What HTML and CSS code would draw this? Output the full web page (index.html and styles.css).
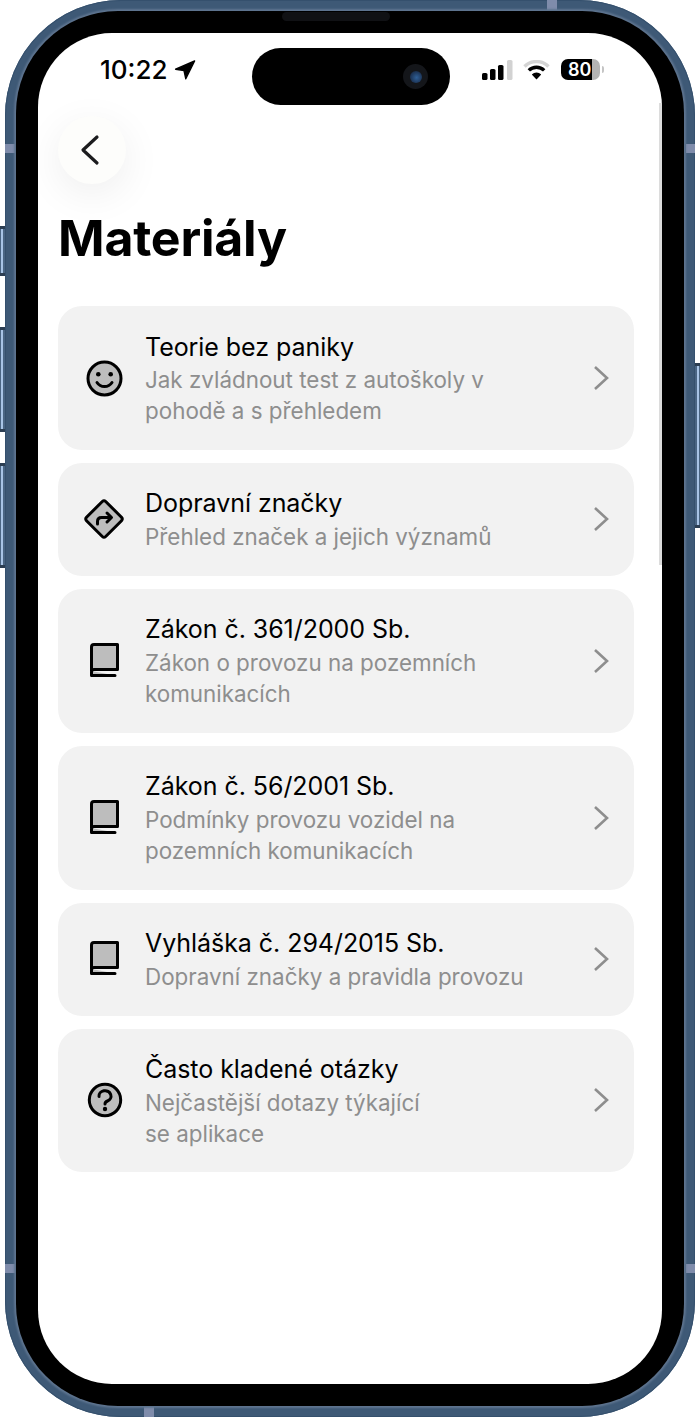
FILE: index.html
```html
<!DOCTYPE html>
<html lang="cs">
<head>
<meta charset="utf-8">
<title>Materiály</title>
<link rel="stylesheet" href="styles.css">
</head>
<body>
<div class="device">
  <span class="side side-l1"></span>
  <span class="side side-l2"></span>
  <span class="side side-l3"></span>
  <span class="side side-r1"></span>
  <div class="phone">
    <span class="band band-top"></span>
    <span class="band band-bottom"></span>
    <span class="band band-l1"></span>
    <span class="band band-l2"></span>
    <span class="band band-r1"></span>
    <span class="band band-r2"></span>
    <div class="bezel">
      <span class="speaker"></span>
      <div class="screen">
        <span class="edge"></span>
        <header class="status">
          <div class="status-left">
            <span class="time">10:22</span>
            <svg class="loc" width="22" height="20" viewBox="0 0 22 20"><path d="M20.6 1 L1.6 9.2 L10 10.6 L11.8 18.8 Z" fill="#000" stroke="#000" stroke-width="1.4" stroke-linejoin="round"/></svg>
          </div>
          <div class="island">
            <span class="camera"><span class="lens"></span></span>
          </div>
          <div class="status-right">
            <svg width="31" height="20" viewBox="0 0 31 20"><rect x="0" y="13" width="5.5" height="7" rx="1.6" fill="#000"/><rect x="8" y="9" width="5.5" height="11" rx="1.6" fill="#000"/><rect x="16" y="5" width="5.5" height="15" rx="1.6" fill="#000"/><rect x="25" y="0" width="5.5" height="20" rx="1.6" fill="#d2d2d2"/></svg>
            <svg class="wifi" width="27" height="20" viewBox="0 0 27 20"><path d="M1.5 6.5 A17 17 0 0 1 25.5 6.5" fill="none" stroke="#d4d4d4" stroke-width="3.4"/><path d="M5.8 10.4 A11 11 0 0 1 21.2 10.4" fill="none" stroke="#000" stroke-width="3.4"/><path d="M13.5 19.6 L8.8 14.4 A7 7 0 0 1 18.2 14.4 Z" fill="#000"/></svg>
            <span class="battery"><span class="batt-num">80</span></span>
          </div>
        </header>

        <button class="back" type="button" aria-label="Zpět">
          <svg width="20" height="32" viewBox="0 0 20 32"><path d="M17 3 L3 16 L17 29" fill="none" stroke="#1c1c1e" stroke-width="3.2" stroke-linecap="round" stroke-linejoin="round"/></svg>
        </button>

        <h1 class="title">Materiály</h1>

        <ul class="list">
          <li class="card">
            <svg class="icon" width="40" height="40" viewBox="0 0 40 40"><circle cx="20.5" cy="20.5" r="16.5" fill="#bdbdbd" stroke="#000" stroke-width="3"/><circle cx="14.3" cy="16.3" r="2.3" fill="#000"/><circle cx="26.7" cy="16.3" r="2.3" fill="#000"/><path d="M13 24.5 A9 9 0 0 0 28 24.5" fill="none" stroke="#000" stroke-width="3" stroke-linecap="round"/></svg>
            <div class="text">
              <div class="name">Teorie bez paniky</div>
              <div class="desc">Jak zvládnout test z autoškoly v<br>pohodě a s přehledem</div>
            </div>
            <svg class="chev" width="16" height="26" viewBox="0 0 16 26"><path d="M2 2 L14 13 L2 24" fill="none" stroke="#8e8e8e" stroke-width="2.6"/></svg>
          </li>
          <li class="card">
            <svg class="icon" width="40" height="40" viewBox="0 0 40 40"><path d="M18.3 2.5 Q20 1 21.7 2.5 L37.5 18.3 Q39 20 37.5 21.7 L21.7 37.5 Q20 39 18.3 37.5 L2.5 21.7 Q1 20 2.5 18.3 Z" fill="#bdbdbd" stroke="#000" stroke-width="3" stroke-linejoin="round"/><path d="M13.5 25 V22.5 Q13.5 18.5 17.5 18.5 H27 M23 14 L27.5 18.5 L23 23" fill="none" stroke="#000" stroke-width="3" stroke-linecap="round" stroke-linejoin="round"/></svg>
            <div class="text">
              <div class="name">Dopravní značky</div>
              <div class="desc">Přehled značek a jejich významů</div>
            </div>
            <svg class="chev" width="16" height="26" viewBox="0 0 16 26"><path d="M2 2 L14 13 L2 24" fill="none" stroke="#8e8e8e" stroke-width="2.6"/></svg>
          </li>
          <li class="card">
            <svg class="icon" width="40" height="40" viewBox="0 0 40 40"><path d="M7.5 30 V6 Q7.5 3.5 10 3.5 H33.5 V28.5 H10 Q7.5 28.5 7.5 31 V34.5 H31" fill="#bdbdbd" stroke="#000" stroke-width="3" stroke-linejoin="round" stroke-linecap="round"/></svg>
            <div class="text">
              <div class="name">Zákon č. 361/2000 Sb.</div>
              <div class="desc">Zákon o provozu na pozemních<br>komunikacích</div>
            </div>
            <svg class="chev" width="16" height="26" viewBox="0 0 16 26"><path d="M2 2 L14 13 L2 24" fill="none" stroke="#8e8e8e" stroke-width="2.6"/></svg>
          </li>
          <li class="card">
            <svg class="icon" width="40" height="40" viewBox="0 0 40 40"><path d="M7.5 30 V6 Q7.5 3.5 10 3.5 H33.5 V28.5 H10 Q7.5 28.5 7.5 31 V34.5 H31" fill="#bdbdbd" stroke="#000" stroke-width="3" stroke-linejoin="round" stroke-linecap="round"/></svg>
            <div class="text">
              <div class="name">Zákon č. 56/2001 Sb.</div>
              <div class="desc">Podmínky provozu vozidel na<br>pozemních komunikacích</div>
            </div>
            <svg class="chev" width="16" height="26" viewBox="0 0 16 26"><path d="M2 2 L14 13 L2 24" fill="none" stroke="#8e8e8e" stroke-width="2.6"/></svg>
          </li>
          <li class="card">
            <svg class="icon" width="40" height="40" viewBox="0 0 40 40"><path d="M7.5 30 V6 Q7.5 3.5 10 3.5 H33.5 V28.5 H10 Q7.5 28.5 7.5 31 V34.5 H31" fill="#bdbdbd" stroke="#000" stroke-width="3" stroke-linejoin="round" stroke-linecap="round"/></svg>
            <div class="text">
              <div class="name">Vyhláška č. 294/2015 Sb.</div>
              <div class="desc">Dopravní značky a pravidla provozu</div>
            </div>
            <svg class="chev" width="16" height="26" viewBox="0 0 16 26"><path d="M2 2 L14 13 L2 24" fill="none" stroke="#8e8e8e" stroke-width="2.6"/></svg>
          </li>
          <li class="card">
            <svg class="icon" width="40" height="40" viewBox="0 0 40 40"><circle cx="21" cy="20" r="15.7" fill="#bdbdbd" stroke="#000" stroke-width="3"/><path d="M15 16.5 A6 5.4 0 1 1 23.5 21 Q21 22 21 24" fill="none" stroke="#000" stroke-width="3" stroke-linecap="round"/><circle cx="21" cy="29" r="2.2" fill="#000"/></svg>
            <div class="text">
              <div class="name">Často kladené otázky</div>
              <div class="desc">Nejčastější dotazy týkající<br>se aplikace</div>
            </div>
            <svg class="chev" width="16" height="26" viewBox="0 0 16 26"><path d="M2 2 L14 13 L2 24" fill="none" stroke="#8e8e8e" stroke-width="2.6"/></svg>
          </li>
        </ul>
      </div>
    </div>
  </div>
</div>
</body>
</html>
```

FILE: styles.css
```css
* { box-sizing: border-box; }
html, body { margin: 0; padding: 0; background: #fff; }
body { width: 700px; height: 1418px; overflow: hidden; font-family: Inter, "Liberation Sans", sans-serif; color: #000; }

.device { position: relative; width: 700px; height: 1417px; padding: 0 5px; }
.phone {
  position: relative;
  height: 1417px;
  padding: 11px;
  border-radius: 116px;
  background: #3e5976;
  box-shadow: inset 0 0 0 1px #35506d;
}
.bezel {
  position: relative;
  height: 100%;
  padding: 22px;
  border-radius: 102px;
  background: #000;
  box-shadow: 0 0 2px 2px #5f7590;
}
.screen {
  position: relative;
  height: 100%;
  border-radius: 74px;
  background: #fff;
  overflow: hidden;
}

/* device hardware, laid over the frame */
.side { position: absolute; width: 5px; background: linear-gradient(90deg, #4a6583 0 1px, #a8c4e6 1px 3.5px, #4a6583 3.5px); border-top: 3px solid #2c3e52; border-bottom: 3px solid #2c3e52; }
.side-l1 { left: 0; top: 226px; height: 50px; }
.side-l2 { left: 0; top: 327px; height: 105px; }
.side-l3 { left: 0; top: 463px; height: 105px; }
.side-r1 { right: 0; top: 363px; height: 165px; background: linear-gradient(270deg, #4a6583 0 1px, #a8c4e6 1px 3.5px, #4a6583 3.5px); }
.band { position: absolute; background: #7f8cab; }
.band-top { left: 542px; top: 0; width: 10px; height: 10px; }
.band-bottom { left: 139px; bottom: 0; width: 10px; height: 10px; }
.band-l1 { left: 0; top: 144px; width: 10px; height: 9px; }
.band-l2 { left: 0; top: 1264px; width: 10px; height: 9px; }
.band-r1 { right: 0; top: 144px; width: 9px; height: 9px; }
.band-r2 { right: 0; top: 1264px; width: 9px; height: 9px; }
.speaker { position: absolute; left: 266px; top: 1px; width: 108px; height: 9px; border-radius: 5px; background: #101114; }
.edge { position: absolute; right: 0; top: 70px; width: 3px; height: 462px; background: #dcdcdc; }

/* status bar */
.status { display: flex; height: 72px; padding-top: 15px; }
.status-left { width: 214px; padding: 6px 0 0 62px; display: flex; align-items: flex-start; gap: 6px; }
.time { font-size: 26px; line-height: 32px; font-weight: 500; }
.loc { margin-top: 6px; }
.island { width: 198px; height: 57px; border-radius: 29px; background: #000; display: flex; align-items: center; justify-content: flex-end; padding-right: 22px; }
.camera { width: 25px; height: 25px; border-radius: 50%; background: #14161a; display: flex; align-items: center; justify-content: center; }
.lens { width: 12px; height: 12px; border-radius: 50%; background: radial-gradient(circle at 55% 55%, #2f5f96, #1a2f4e 70%); }
.status-right { flex: 1; padding: 12px 0 0 32px; display: flex; align-items: flex-start; gap: 10px; }
.wifi + .battery { margin-left: 1px; }
.battery { position: relative; width: 39px; height: 21px; border-radius: 7px; background: linear-gradient(90deg, #000 80%, #b4b4b4 80%); color: #fff; font-size: 18px; font-weight: 600; line-height: 21px; padding-left: 7px; margin-top: -1px; }
.batt-num { display: block; }
.battery::after { content: ""; position: absolute; right: -4px; top: 7px; width: 2px; height: 7px; border-radius: 0 2px 2px 0; background: #c4c4c4; }

/* header */
.back {
  display: flex; align-items: center; justify-content: center;
  width: 68px; height: 68px; margin: 11px 0 0 20px; padding: 0 4px 0 0;
  border: 0; border-radius: 50%; background: #fdfdfb;
  box-shadow: 0 10px 40px rgba(0, 0, 0, 0.07);
}
.title { margin: 24px 0 0 20px; font-size: 50px; line-height: 60px; font-weight: 700; letter-spacing: -0.2px; }

/* list */
.list { list-style: none; display: flex; flex-direction: column; gap: 13px; width: 576px; margin: 38px 0 0 20px; padding: 0; }
.card { display: flex; align-items: center; padding: 23.5px 25px 23.5px 26px; border-radius: 24px; background: #f2f2f2; }
.icon { flex: none; }
.text { flex: 1; margin-left: 21px; }
.name { font-size: 25px; line-height: 34.9px; font-weight: 400; letter-spacing: -0.05px; }
.desc { font-size: 22.4px; line-height: 31px; color: #8e8e8e; }
.chev { flex: none; }
```
